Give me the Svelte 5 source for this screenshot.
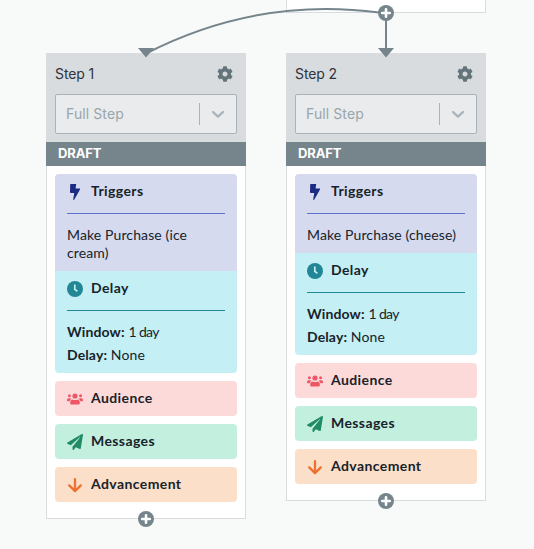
<script>
  const steps = [
    { name: 'Step 1', trigger: 'Make Purchase (ice cream)' },
    { name: 'Step 2', trigger: 'Make Purchase (cheese)' }
  ];
  const actions = [
    { key: 'audience', label: 'Audience' },
    { key: 'messages', label: 'Messages' },
    { key: 'advancement', label: 'Advancement' }
  ];
</script>

{#snippet icon(name)}
  <svg class="icon" viewBox="0 0 16 16" aria-hidden="true">
    {#if name === 'triggers'}
      <path d="M3.7 0H9.2L8.6 4.5H12.6Q13.3 4.7 13 5.4L7.2 15.7Q6.6 16.2 6.2 15.4L7.2 9H3.6Q3 8.8 3 8.1L3.2.6Q3.2.1 3.7 0Z" fill="#1b2a83" />
    {:else if name === 'delay'}
      <circle cx="8" cy="8" r="8" fill="#218695" />
      <path d="M7.8 3.4V8.4L10.4 10.2" fill="none" stroke="#c4eff4" stroke-width="1.7" />
    {:else if name === 'audience'}
      <g fill="#ed5665">
        <circle cx="8" cy="5" r="2.6" /><circle cx="2.4" cy="4.7" r="1.5" /><circle cx="13.6" cy="4.7" r="1.5" />
        <path d="M5.3 8.4C6.6 9.1 9.4 9.1 10.7 8.4C12.1 8.8 12.8 9.8 12.8 11V12.2Q12.8 13.4 11.6 13.4H4.4Q3.2 13.4 3.2 12.2V11C3.2 9.8 3.9 8.8 5.3 8.4Z" />
        <path d="M1.6 7.2H3.2Q4 7.2 4.5 7.8Q3 8.7 2.6 10.3H.7Q0 10.3 0 9.6V8.8Q0 7.2 1.6 7.2ZM14.4 7.2H12.8Q12 7.2 11.5 7.8Q13 8.7 13.4 10.3H15.3Q16 10.3 16 9.6V8.8Q16 7.2 14.4 7.2Z" />
      </g>
    {:else if name === 'messages'}
      <path transform="scale(.03125)" fill="#208b65" d="M476 3.2L12.5 270.6c-18.1 10.4-15.8 35.6 2.2 43.2L121 358.4l287.3-253.2c5.5-4.9 13.3 2.6 8.6 8.3L176 407v80.5c0 23.6 28.5 32.9 42.5 15.8L282 426l124.6 52.2c14.2 6 30.4-2.9 33-18.2l72-432C515 7.8 493.3-6.8 476 3.2z" />
    {:else}
      <path d="M8 2.2V13.8M2.2 8.4L8 14.1L13.8 8.4" fill="none" stroke="#ee7130" stroke-width="2.3" stroke-linecap="round" stroke-linejoin="round" />
    {/if}
  </svg>
{/snippet}

{#snippet plus()}
  <svg class="plus" viewBox="0 0 16 16" aria-hidden="true">
    <circle cx="8" cy="8" r="8" fill="#75858b" />
    <path d="M8 4.2V11.8M4.2 8H11.8" stroke="#fff" stroke-width="2.6" stroke-linecap="round" />
  </svg>
{/snippet}

<main class="canvas">
  <div class="parent">{@render plus()}</div>
  <div class="steps">
    {#each steps as step}
      <article class="card">
        <header class="head">
          <div class="title-row">
            <span class="name">{step.name}</span>
            <svg class="cog" viewBox="0 0 512 512" aria-hidden="true">
              <path fill="#64747b" d="M487.4 315.7l-42.6-24.6c4.3-23.2 4.3-47 0-70.2l42.6-24.6c4.9-2.8 7.1-8.6 5.5-14-11.1-35.6-30-67.8-54.7-94.6-3.8-4.1-10-5.1-14.8-2.3L380.8 110c-17.9-15.4-38.5-27.3-60.8-35.1V25.8c0-5.6-3.9-10.5-9.4-11.7-36.7-8.2-74.3-7.8-109.2 0-5.5 1.2-9.4 6.1-9.4 11.7V75c-22.2 7.9-42.8 19.8-60.8 35.1L88.7 85.5c-4.9-2.8-11-1.9-14.8 2.3-24.7 26.7-43.6 58.9-54.7 94.6-1.7 5.4.6 11.2 5.5 14L67.3 221c-4.3 23.2-4.3 47 0 70.2l-42.6 24.6c-4.9 2.8-7.1 8.6-5.5 14 11.1 35.6 30 67.8 54.7 94.6 3.8 4.1 10 5.1 14.8 2.3l42.6-24.6c17.9 15.4 38.5 27.3 60.8 35.1v49.2c0 5.6 3.9 10.5 9.4 11.7 36.7 8.2 74.3 7.8 109.2 0 5.5-1.2 9.4-6.1 9.4-11.7v-49.2c22.2-7.9 42.8-19.8 60.8-35.1l42.6 24.6c4.9 2.8 11 1.9 14.8-2.3 24.7-26.7 43.6-58.9 54.7-94.6 1.5-5.5-.7-11.3-5.6-14.1zM256 336c-44.1 0-80-35.9-80-80s35.9-80 80-80 80 35.9 80 80-35.9 80-80 80z" />
            </svg>
          </div>
          <div class="select">
            <span class="value">Full Step</span>
            <span class="sep"></span>
            <svg class="chevron" viewBox="0 0 20 20" aria-hidden="true">
              <path d="M5 8L10 12.6L15 8" fill="none" stroke="#a7b3b9" stroke-width="2.2" stroke-linecap="round" stroke-linejoin="round" />
            </svg>
          </div>
        </header>
        <div class="status"><span>DRAFT</span></div>
        <div class="body">
          <div class="group">
            <section class="triggers">
              <h3>{@render icon('triggers')}<span>Triggers</span></h3>
              <div class="detail"><p>{step.trigger}</p></div>
            </section>
            <section class="delay">
              <h3>{@render icon('delay')}<span>Delay</span></h3>
              <div class="detail">
                <p><b>Window:</b> <span class="amount">1 day</span></p>
                <p><b>Delay:</b> <span>None</span></p>
              </div>
            </section>
          </div>
          {#each actions as action}
            <section class="action {action.key}">
              <h3>{@render icon(action.key)}<span>{action.label}</span></h3>
            </section>
          {/each}
        </div>
        {@render plus()}
      </article>
    {/each}
  </div>
  <svg class="links" viewBox="0 0 534 60" aria-hidden="true">
    <path d="M379 12.5C303 2.5 226 12.5 146 53.5M386 20V50" fill="none" stroke="#75858b" stroke-width="2" />
    <path d="M138 48H154L146 57.5ZM378 48H394L386 57.5Z" fill="#75858b" />
  </svg>
</main>

<style>
  .canvas {
    position: relative;
    box-sizing: border-box;
    width: 534px;
    height: 549px;
    overflow: hidden;
    background: #f8faf9;
    color: #17232a;
    font-family: Lato, sans-serif;
  }
  .parent {
    position: relative;
    box-sizing: border-box;
    width: 200px;
    height: 13px;
    margin-left: 286px;
    background: #fff;
    border: 1px solid #d8dcdf;
    border-top: 0;
  }
  .steps {
    display: flex;
    align-items: flex-start;
    gap: 40px;
    padding: 40px 48px 0 46px;
  }
  .card {
    position: relative;
    width: 200px;
  }
  .head {
    box-sizing: border-box;
    height: 89px;
    padding: 0 9px;
    background: #d8dcdf;
  }
  .title-row {
    display: flex;
    align-items: center;
    justify-content: space-between;
    height: 41px;
    padding-right: 4px;
  }
  .name {
    font: 14px/20px Inter, sans-serif;
    letter-spacing: -0.1px;
    color: #303338;
  }
  .cog { width: 16px; height: 16px; }
  .select {
    display: flex;
    align-items: center;
    box-sizing: border-box;
    height: 40px;
    padding: 0 8px 0 10px;
    border: 1px solid #a7b3b9;
    border-radius: 2px;
    background: #e9ebed;
  }
  .value {
    flex: 1;
    font: 14px/20px Inter, sans-serif;
    letter-spacing: 0.1px;
    color: #98a6ad;
  }
  .sep {
    width: 1px;
    height: 22px;
    margin-right: 8px;
    background: #a7b3b9;
  }
  .chevron { width: 20px; height: 20px; }
  .status {
    height: 24px;
    padding-left: 12px;
    background: #75858b;
    color: #fff;
    font: bold 13px/23px Inter, sans-serif;
    letter-spacing: -0.15px;
  }
  .body {
    display: flex;
    flex-direction: column;
    gap: 8px;
    padding: 8px 8px 16px;
    background: #fff;
    border: 1px solid #d8dcdf;
    border-top: 0;
  }
  .group, .action {
    overflow: hidden;
    border-radius: 4px;
  }
  h3 {
    display: flex;
    align-items: center;
    gap: 8px;
    height: 35px;
    margin: 0;
    padding: 0 12px;
    font-size: 14px;
    line-height: 20px;
    font-weight: 700;
    letter-spacing: 0.4px;
  }
  h3 span { padding-bottom: 2px; }
  .icon { width: 16px; height: 16px; }
  .detail {
    margin: 4px 12px 0;
    padding: 12px 0 9px;
    border-top: 1px solid;
  }
  p {
    margin: 0;
    font-size: 14px;
    line-height: 18px;
    letter-spacing: 0.12px;
  }
  p + p { margin-top: 5px; }
  .amount { letter-spacing: -0.6px; }
  .triggers { background: #d6daee; }
  .triggers .detail { border-color: #5d72ca; }
  .delay { background: #c4eff4; }
  .delay .detail { border-color: #218695; }
  .audience { background: #fddada; }
  .messages { background: #c3efdf; }
  .advancement { background: #fcdfc8; }
  .plus {
    position: absolute;
    left: 50%;
    bottom: -8px;
    width: 16px;
    height: 16px;
    transform: translateX(-50%);
  }
  .parent .plus { bottom: -9px; }
  .links {
    position: absolute;
    top: 0;
    left: 0;
    width: 534px;
    height: 60px;
    pointer-events: none;
  }
</style>
